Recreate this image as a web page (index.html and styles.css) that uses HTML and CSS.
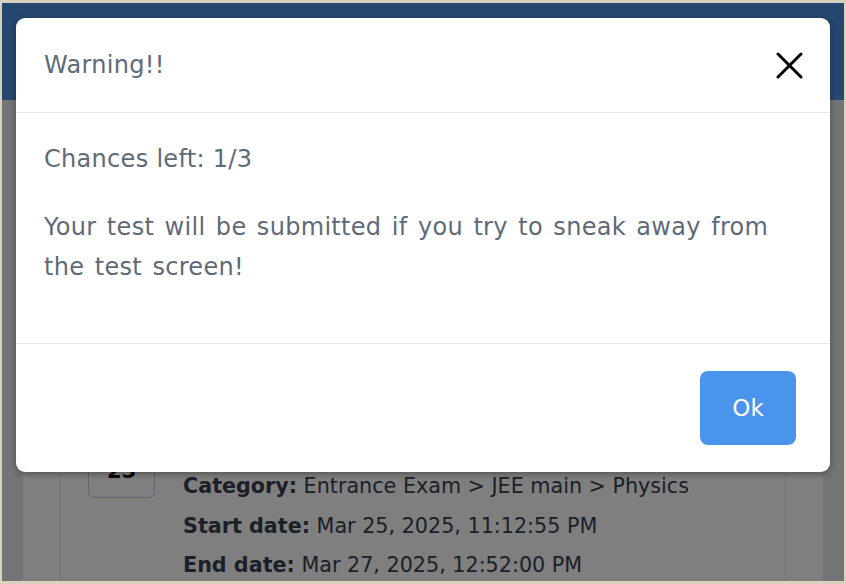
FILE: index.html
```html
<!DOCTYPE html>
<html lang="en">
<head>
  <meta charset="utf-8" />
  <title>Test | Warning</title>
  <meta name="viewport" content="width=device-width, initial-scale=1.0" />
  <link rel="stylesheet" href="styles.css">
</head>
<body>
  <div class="screen">
    <header class="topbar"></header>

    <main class="page">
      <section class="panel">
        <div class="test-card">
          <div class="date-box">25</div>
          <div class="test-info">
            <p><strong>Category:</strong> Entrance Exam &gt; JEE main &gt; Physics</p>
            <p><strong>Start date:</strong> Mar 25, 2025, 11:12:55 PM</p>
            <p><strong>End date:</strong> Mar 27, 2025, 12:52:00 PM</p>
          </div>
        </div>
      </section>
    </main>

    <div class="backdrop"></div>

    <div class="modal">
      <div class="modal-header">
        <h5>Warning!!</h5>
        <button class="close-btn" aria-label="Close">
          <svg width="27" height="27" viewBox="0 0 27 27">
            <path d="M2 2 L25 25 M25 2 L2 25" stroke="#000" stroke-width="3" stroke-linecap="round" />
          </svg>
        </button>
      </div>
      <div class="modal-body">
        <p class="chances">Chances left: 1/3</p>
        <p>Your test will be submitted if you try to sneak away from the test screen!</p>
      </div>
      <div class="modal-footer">
        <button class="ok-btn">Ok</button>
      </div>
    </div>
  </div>
</body>
</html>
```

FILE: styles.css
```css
html, body {
  margin: 0;
  height: 100%;
}

body {
  background: #d8d1bd;
  padding: 3px 2px;
  box-sizing: border-box;
  font-family: "DejaVu Sans", sans-serif;
}

.screen {
  position: relative;
  height: 578px;
  overflow: hidden;
  background: #e4e8ec;
}

.topbar {
  height: 97px;
  background: #4c8ede;
}

.page {
  padding: 0 21px;
}

.panel {
  background: #fff;
  padding: 40px 37px 0;
  height: 520px;
  box-sizing: border-box;
}

.test-card {
  border: 1px solid #e4e4e4;
  border-bottom: none;
  height: 100%;
  padding: 326px 27px 0;
  box-sizing: border-box;
  display: flex;
  align-items: flex-start;
  gap: 28px;
}

.date-box {
  width: 67px;
  height: 62px;
  box-sizing: border-box;
  margin-top: -31px;
  border: 1px solid #b4cfe6;
  border-radius: 6px;
  text-align: center;
  padding-top: 22px;
  font-weight: bold;
  font-size: 21px;
  color: #111;
}

.test-info {
  color: #374151;
  font-size: 20.7px;
}

.test-info p {
  margin: 0;
  line-height: 39.5px;
}

.backdrop {
  position: absolute;
  inset: 0;
  background: rgba(0, 0, 0, 0.5);
}

.modal {
  position: absolute;
  left: 14px;
  top: 15px;
  width: 814px;
  background: #fff;
  border-radius: 9px;
  box-shadow: 0 2px 6px rgba(0, 0, 0, 0.35);
  color: #5f6a78;
  font-size: 24px;
  letter-spacing: 0.3px;
}

.modal-header {
  height: 95px;
  box-sizing: border-box;
  padding: 0 27px 0 28px;
  display: flex;
  align-items: center;
  justify-content: space-between;
  border-bottom: 1px solid #e3e7ef;
}

.modal-header h5 {
  margin: 0;
  font-size: 24px;
  font-weight: normal;
}

.close-btn {
  border: none;
  background: none;
  padding: 0;
  width: 27px;
  height: 27px;
  cursor: pointer;
}

.close-btn svg {
  display: block;
}

.modal-body {
  height: 231px;
  box-sizing: border-box;
  padding: 26px 28px;
  border-bottom: 1px solid #e3e7ef;
}

.modal-body p {
  margin: 0;
  line-height: 40px;
  word-spacing: 2.5px;
}

.modal-body .chances {
  margin-bottom: 28px;
  word-spacing: 0;
}

.modal-footer {
  display: flex;
  justify-content: flex-end;
  padding: 27px 34px;
}

.ok-btn {
  width: 96px;
  height: 74px;
  border: none;
  border-radius: 8px;
  background: #4a94eb;
  color: #fff;
  font-family: inherit;
  font-size: 23px;
  cursor: pointer;
}
```
